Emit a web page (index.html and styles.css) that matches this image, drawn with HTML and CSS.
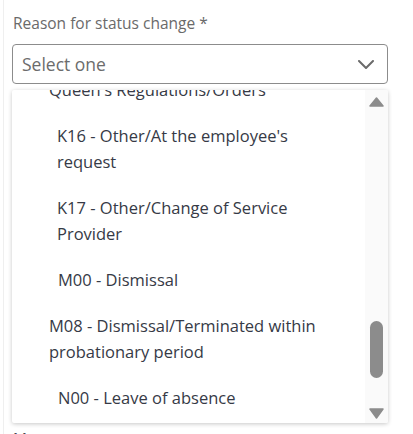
FILE: index.html
```html
<!DOCTYPE html>
<html lang="en">
<head>
<meta charset="utf-8">
<title>Reason for status change</title>
<link rel="stylesheet" href="styles.css">
</head>
<body>
<div class="page">
  <div class="field">
    <label class="field-label">Reason for status change *</label>
    <div class="select-wrap">
      <div class="select">
        <span class="select-value">Select one</span>
        <svg class="chevron" width="16" height="9" viewBox="0 0 16 9"><polyline points="1,1 8,8 15,1" fill="none" stroke="#6b6b6b" stroke-width="2" stroke-linecap="round" stroke-linejoin="round"/></svg>
      </div>
      <div class="listbox">
        <ul class="options">
          <li class="opt">Queen's Regulations/Orders</li>
          <li class="opt opt-k">K16 - Other/At the employee's request</li>
          <li class="opt opt-k">K17 - Other/Change of Service Provider</li>
          <li class="opt opt-m">M00 - Dismissal</li>
          <li class="opt">M08 - Dismissal/Terminated within probationary period</li>
          <li class="opt opt-m">N00 - Leave of absence</li>
        </ul>
        <div class="scrollbar">
          <svg class="arrow" width="15" height="10" viewBox="0 0 15 10"><polygon points="7.5,1 14,9 1,9" fill="#8c8c8c" stroke="#8c8c8c" stroke-width="1.5" stroke-linejoin="round"/></svg>
          <div class="track">
            <div class="thumb" style="margin-top: 214px"></div>
          </div>
          <svg class="arrow" width="15" height="11" viewBox="0 0 15 11"><polygon points="1,1 14,1 7.5,10" fill="#8c8c8c" stroke="#8c8c8c" stroke-width="1.5" stroke-linejoin="round"/></svg>
        </div>
      </div>
    </div>
  </div>
  <div class="field next-field">
    <label class="field-label dark">Manager</label>
  </div>
</div>
</body>
</html>
```
FILE: styles.css
```css
html, body {
  margin: 0;
  padding: 0;
  background: #ffffff;
}
body {
  font-family: "Open Sans", "Lato", sans-serif;
  height: 434px;
  overflow: hidden;
}
.page {
  margin-left: 3px;
  border-left: 1px solid #efefef;
  padding: 13px 25px 0 8px;
  min-height: 434px;
  box-sizing: border-box;
}
.field {
  display: flex;
  flex-direction: column;
}
.field-label {
  font-size: 15.5px;
  line-height: 20px;
  color: #6a6a6a;
  margin-bottom: 11px;
  padding-left: 1px;
}
.field-label.dark {
  color: #4a4a55;
}
.select-wrap {
  position: relative;
}
.select {
  height: 40px;
  box-sizing: border-box;
  border: 1px solid #8c8c8c;
  border-radius: 4px;
  display: flex;
  align-items: center;
  justify-content: space-between;
  padding: 0 13px 0 9px;
  background: #fff;
}
.select-value {
  font-size: 17.5px;
  color: #6c6c6c;
  margin-top: -1px;
}
.chevron {
  display: block;
  margin-top: 1px;
}
.listbox {
  position: absolute;
  left: 0;
  right: 0;
  top: 46px;
  height: 333px;
  background: #fff;
  box-shadow: 0 1px 4px rgba(0, 0, 0, 0.22);
  border-radius: 2px;
  display: flex;
  overflow: hidden;
}
.options {
  flex: 1;
  list-style: none;
  margin: -23px 0 0 0;
  padding: 0 14px 0 0;
}
.opt {
  font-size: 16.5px;
  line-height: 26px;
  color: #363a46;
  padding: 10px 0 10px 37px;
}
.opt-k {
  padding-left: 45px;
}
.opt-m {
  padding-left: 46px;
}
.scrollbar {
  width: 23px;
  background: #fafafa;
  display: flex;
  flex-direction: column;
  align-items: center;
  padding: 7px 0 4px 0;
  box-sizing: border-box;
}
.arrow {
  display: block;
  flex: none;
}
.track {
  flex: 1;
  width: 100%;
  display: flex;
  flex-direction: column;
  align-items: center;
}
.thumb {
  width: 13px;
  height: 57px;
  border-radius: 7px;
  background: #8c8c8c;
}
.next-field {
  margin-top: 345px;
}
```
